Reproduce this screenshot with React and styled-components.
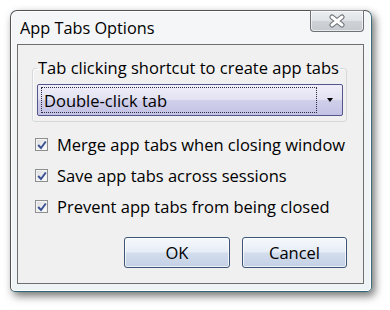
import React from "react";
import styled, { createGlobalStyle } from "styled-components";

const Global = createGlobalStyle`
  html, body {
    margin: 0;
    padding: 0;
    background: #ffffff;
  }
  body {
    font-family: "Open Sans", "Noto Sans", sans-serif;
    color: #000;
  }
`;

const Page = styled.div`
  width: 390px;
  height: 310px;
  padding: 10px 0 0 10px;
  box-sizing: border-box;
`;

const Window = styled.div`
  width: 362px;
  height: 282px;
  box-sizing: border-box;
  border: 1px solid #505254;
  border-right-color: #3a6c7a;
  border-bottom-color: #2f6676;
  border-radius: 7px 7px 5px 5px;
  background: linear-gradient(#f4f6f7, #eef3f5);
  box-shadow: inset 0 0 0 1px #ffffff, 3px 4px 8px rgba(0, 0, 0, 0.55);
  display: flex;
  flex-direction: column;
`;

const TitleBar = styled.div`
  height: 33px;
  display: flex;
  justify-content: space-between;
  align-items: flex-start;
  padding-left: 9px;
  padding-right: 7px;
`;

const Title = styled.div`
  font-size: 16.3px;
  line-height: 20px;
  margin-top: 7px;
`;

const CloseButton = styled.div`
  width: 54px;
  height: 22px;
  margin-top: -1px;
  box-sizing: border-box;
  border: 1px solid #6e7175;
  border-top-color: #8a8d90;
  border-radius: 0 0 4px 4px;
  background: linear-gradient(#eceef0 0%, #dfe2e5 50%, #cfd3d7 51%, #c6cacf 100%);
  box-shadow: inset 0 0 0 1px rgba(255, 255, 255, 0.6);
  display: flex;
  align-items: center;
  justify-content: center;
`;

const Client = styled.div`
  height: 240px;
  margin: 0 7px 0 6px;
  box-sizing: border-box;
  border: 1px solid #6f6f6f;
  background: #f0f0f0;
  padding: 12px 16px 0 14px;
  display: flex;
  flex-direction: column;
`;

const Group = styled.fieldset`
  margin: 0;
  padding: 0 3px 5px 4px;
  border: 1px solid #d5d9dc;
  border-radius: 3px;
  box-shadow: inset 1px 1px 0 #fbfbfb;
`;

const Legend = styled.legend`
  font-size: 16.5px;
  line-height: 22px;
  padding: 0 1px;
  margin-left: 0;
`;

const Select = styled.div`
  margin-top: 5px;
  height: 32px;
  box-sizing: border-box;
  border: 1px solid #55558e;
  border-radius: 2px;
  background: linear-gradient(#efeef8 0%, #e3e2f2 48%, #d0cfea 52%, #c4c2e4 100%);
  display: flex;
  align-items: center;
`;

const FocusRect = styled.div`
  flex: 1;
  height: 26px;
  margin-left: 3px;
  box-sizing: border-box;
  border: 1px dotted #2a2a40;
  display: flex;
  align-items: center;
  padding-left: 2px;
  font-size: 16.5px;
`;

const ArrowCell = styled.div`
  width: 25px;
  display: flex;
  justify-content: center;
  align-items: center;
`;

const Arrow = styled.div`
  width: 0;
  height: 0;
  border-left: 3.5px solid transparent;
  border-right: 3.5px solid transparent;
  border-top: 4px solid #000;
`;

const Options = styled.div`
  margin-top: 7px;
  display: flex;
  flex-direction: column;
`;

const OptionRow = styled.label`
  height: 31px;
  display: flex;
  align-items: center;
  padding-left: 3px;
  font-size: 16.5px;
`;

const CheckBox = styled.span`
  width: 13px;
  height: 13px;
  box-sizing: border-box;
  border: 1px solid #8e8f8f;
  background: linear-gradient(135deg, #dcdcdc, #ffffff);
  box-shadow: inset 0 0 0 1px #f4f4f4;
  display: flex;
  align-items: center;
  justify-content: center;
  margin-right: 9px;
  flex-shrink: 0;
`;

const ButtonRow = styled.div`
  margin-top: 15px;
  display: flex;
  justify-content: flex-end;
  gap: 12px;
`;

const Button = styled.div`
  width: ${(p) => p.$width}px;
  height: 31px;
  box-sizing: border-box;
  border: 1px solid #3d5577;
  border-radius: 3px;
  background: linear-gradient(#f6f9fd 0%, #e6edf6 48%, #d2ddec 52%, #c4d1e5 100%);
  box-shadow: inset 0 0 0 1px rgba(255, 255, 255, 0.7);
  display: flex;
  align-items: center;
  justify-content: center;
  font-size: 16.5px;
`;

const options = [
  "Merge app tabs when closing window",
  "Save app tabs across sessions",
  "Prevent app tabs from being closed",
];

export default function App() {
  return (
    <Page>
      <Global />
      <Window>
        <TitleBar>
          <Title>App Tabs Options</Title>
          <CloseButton>
            <svg width="18" height="14" viewBox="0 0 18 14">
              <path d="M4 3 L14 11 M14 3 L4 11" stroke="#6a6d72" strokeWidth="5" strokeLinecap="round" fill="none" />
              <path d="M4 3 L14 11 M14 3 L4 11" stroke="#ffffff" strokeWidth="3" strokeLinecap="round" fill="none" />
            </svg>
          </CloseButton>
        </TitleBar>
        <Client>
          <Group>
            <Legend>Tab clicking shortcut to create app tabs</Legend>
            <Select>
              <FocusRect>Double-click tab</FocusRect>
              <ArrowCell>
                <Arrow />
              </ArrowCell>
            </Select>
          </Group>
          <Options>
            {options.map((o) => (
              <OptionRow key={o}>
                <CheckBox>
                  <svg width="10" height="10" viewBox="0 0 10 10">
                    <path d="M1.2 5 L4 8 L8.8 1.5" stroke="#3b5394" strokeWidth="2" fill="none" />
                  </svg>
                </CheckBox>
                {o}
              </OptionRow>
            ))}
          </Options>
          <ButtonRow>
            <Button $width={106}>OK</Button>
            <Button $width={105}>Cancel</Button>
          </ButtonRow>
        </Client>
      </Window>
    </Page>
  );
}
